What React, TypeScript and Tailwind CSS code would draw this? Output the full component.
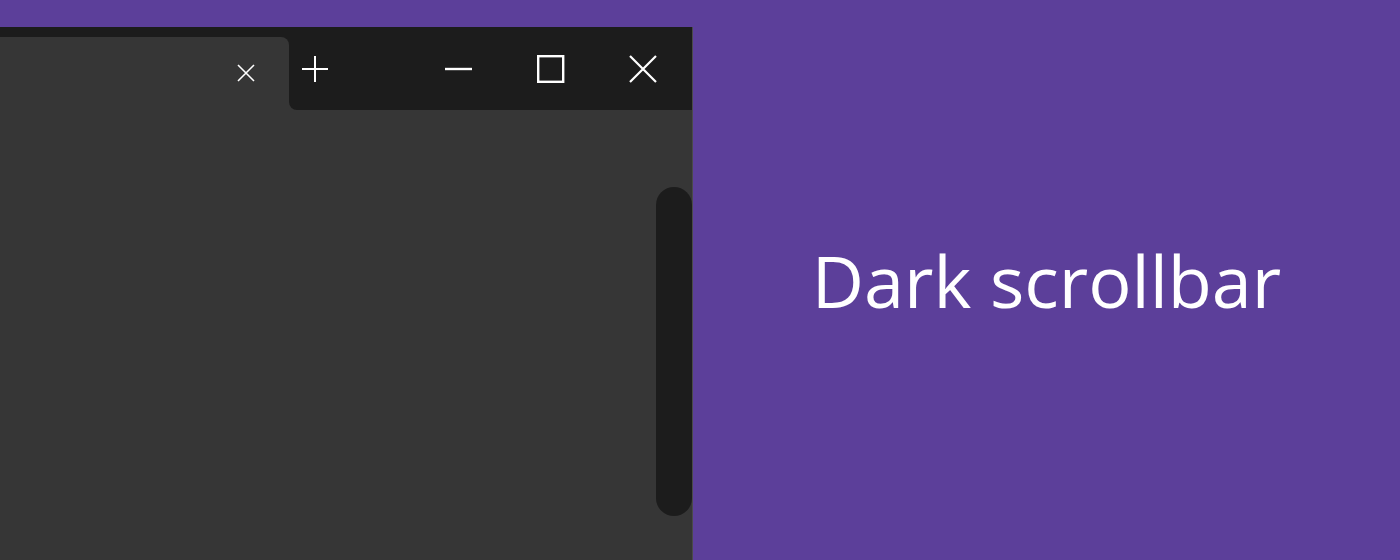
import React from 'react'

function TabClose() {
  return (
    <svg width="18" height="18" viewBox="0 0 18 18" fill="none" stroke="white" strokeWidth="1.6">
      <path d="M1 1 L17 17 M17 1 L1 17" />
    </svg>
  )
}

function Plus() {
  return (
    <svg width="26" height="26" viewBox="0 0 26 26" fill="none" stroke="white" strokeWidth="2">
      <path d="M13 0 V26 M0 13 H26" />
    </svg>
  )
}

function Minimize() {
  return (
    <svg width="28" height="28" viewBox="0 0 28 28" fill="none" stroke="white" strokeWidth="2.4">
      <path d="M0 14 H27" />
    </svg>
  )
}

function Maximize() {
  return (
    <svg width="28" height="28" viewBox="0 0 28 28" fill="none" stroke="white" strokeWidth="2.4">
      <rect x="1.2" y="1.2" width="25" height="25.6" />
    </svg>
  )
}

function Close() {
  return (
    <svg width="28" height="28" viewBox="0 0 28 28" fill="none" stroke="white" strokeWidth="2.2">
      <path d="M1 1 L27 27 M27 1 L1 27" />
    </svg>
  )
}

export default function App() {
  return (
    <div className="flex h-[560px] w-[1400px] overflow-hidden bg-[#5c3f9a]" style={{ fontFamily: '"Open Sans", "Noto Sans", sans-serif' }}>
      {/* browser window */}
      <div className="mt-[27px] flex w-[693px] shrink-0 flex-col border-r border-[#4a4a4a]">
        <div className="flex h-[83px] bg-[#1c1c1c]">
          <div className="mt-[10px] flex h-[73px] w-[289px] items-center justify-end rounded-tr-lg bg-[#363636] pr-[34px] pb-[1px]">
            <TabClose />
          </div>
          <div className="flex-1 bg-[#363636]">
            <div className="flex h-full items-center rounded-bl-lg bg-[#1c1c1c] pr-[3px]">
              <div className="flex w-[52px] justify-center">
                <Plus />
              </div>
              <div className="flex-1" />
              <div className="flex w-[92px] justify-center">
                <Minimize />
              </div>
              <div className="flex w-[92px] justify-center">
                <Maximize />
              </div>
              <div className="flex w-[92px] justify-center">
                <Close />
              </div>
            </div>
          </div>
        </div>
        <div className="flex flex-1 justify-end bg-[#363636] pt-[77px] pb-[44px]">
          <div className="w-[36px] rounded-full bg-[#1c1c1c]" />
        </div>
      </div>
      <div className="flex flex-1 items-center justify-center">
        <span className="text-[72px] leading-none text-white">Dark scrollbar</span>
      </div>
    </div>
  )
}
